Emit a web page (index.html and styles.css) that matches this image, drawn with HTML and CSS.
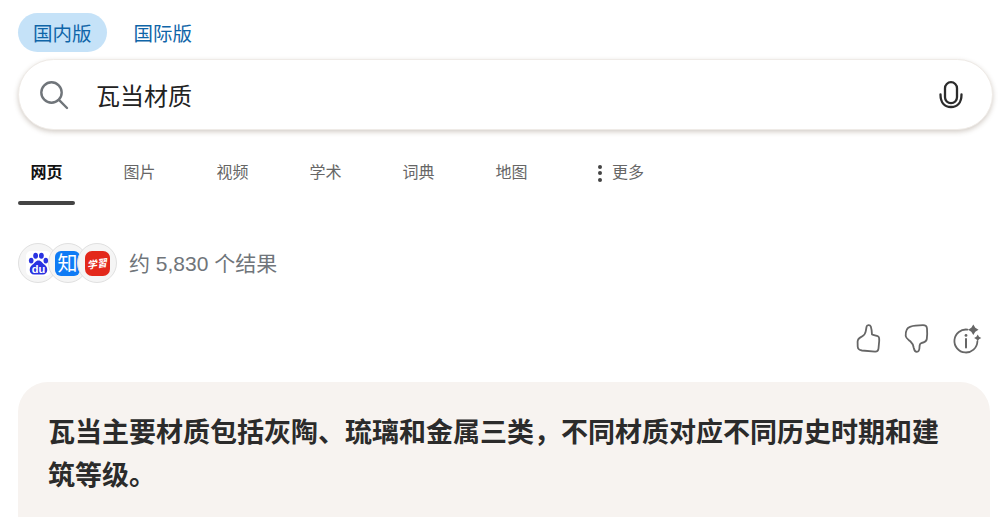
FILE: index.html
```html
<!DOCTYPE html>
<html lang="zh-CN">
<head>
    <meta charset="UTF-8">
    <title>瓦当材质</title>
    <link rel="stylesheet" href="styles.css">
</head>
<body>
    <div class="region-tabs">
        <a class="region active">国内版</a>
        <a class="region">国际版</a>
    </div>

    <div class="search-box">
        <svg class="search-icon" width="30" height="30" viewBox="0 0 30 30" fill="none" stroke="#70757a" stroke-width="2.4" stroke-linecap="round">
            <circle cx="12.5" cy="12.5" r="10.2"/>
            <path d="M20.2 20.2 L28 28"/>
        </svg>
        <span class="query">瓦当材质</span>
        <svg class="mic-icon" width="24" height="28" viewBox="0 0 24 28" fill="none" stroke="#2b2b2b" stroke-width="2.3" stroke-linecap="round">
            <rect x="6" y="1.2" width="12" height="21" rx="6"/>
            <path d="M1.5 13.5 C1.5 22 6 26 12 26 C18 26 22.5 22 22.5 13.5"/>
        </svg>
    </div>

    <nav class="nav">
        <a class="nav-item current">网页</a>
        <a class="nav-item">图片</a>
        <a class="nav-item">视频</a>
        <a class="nav-item">学术</a>
        <a class="nav-item">词典</a>
        <a class="nav-item">地图</a>
        <a class="nav-item more">
            <span class="dots"><i></i><i></i><i></i></span>更多
        </a>
    </nav>

    <div class="sources">
        <div class="logos">
            <span class="logo">
                <svg width="25" height="25" viewBox="0 0 25 25">
                    <rect width="25" height="25" rx="5" fill="#fff"/>
                    <g fill="#2932e1">
                        <ellipse cx="5.2" cy="9.6" rx="2.3" ry="2.9"/>
                        <ellipse cx="9.6" cy="4.8" rx="2.4" ry="3"/>
                        <ellipse cx="15.4" cy="4.8" rx="2.4" ry="3"/>
                        <ellipse cx="19.8" cy="9.6" rx="2.3" ry="2.9"/>
                        <path d="M12.5 9.5 C15.5 9.5 16 12 19 14 C22.5 16.5 22 23.5 17 23.5 L8 23.5 C3 23.5 2.5 16.5 6 14 C9 12 9.5 9.5 12.5 9.5 Z"/>
                    </g>
                    <text x="12.5" y="22" class="du">du</text>
                </svg>
            </span>
            <span class="logo">
                <svg width="25" height="25" viewBox="0 0 25 25">
                    <rect width="25" height="25" rx="6" fill="#0f7bf5"/>
                    <text x="12.5" y="20" class="zhi">知</text>
                </svg>
            </span>
            <span class="logo">
                <svg width="25" height="25" viewBox="0 0 25 25">
                    <rect width="25" height="25" rx="7" fill="#e3281b"/>
                    <text x="0" y="0" class="xue" transform="translate(12.5 16.5) rotate(-8) skewX(-14)">学習</text>
                </svg>
            </span>
        </div>
        <span class="count">约 5,830 个结果</span>
    </div>

    <div class="feedback">
        <svg width="28" height="32" viewBox="0 0 28 32" fill="none" stroke="#666" stroke-width="1.8" stroke-linejoin="round">
            <path d="M2.6 18.7 C2.6 15.5 5 14.5 7 13.5 C9.5 12 10.5 10.5 10.8 8 L11.5 4 C11.8 1.8 15 1.6 15.8 3.5 C16.5 5.5 16.8 8 17 11.5 C19 12.3 21.5 12.5 23 13.3 C24.5 14 24.3 16 24.2 18 L23.5 25.5 C23.3 27.8 22 28.7 20 28.6 L7 27.5 C4.5 27.2 2.8 26 2.7 23.5 Z"/>
        </svg>
        <svg width="28" height="32" viewBox="0 0 28 32" fill="none" stroke="#666" stroke-width="1.8" stroke-linejoin="round">
            <path d="M2.7 13 C2.5 9.5 3.5 5 7 3.8 C10 2.8 16 2.2 20 2.2 C22.5 2.2 23.8 3 24 5.5 C24.3 9 24.3 13 23.8 16 C23.4 18.5 21 19.5 18.5 20 C16.5 20.5 16.5 22 16.5 24 C16.5 27 15.5 28.8 13.8 28.8 C12 28.8 11.2 27 10.8 25 C10.3 22 9.8 20.5 7.5 18.5 C5 16.5 3 15.5 2.7 13 Z"/>
        </svg>
        <svg width="32" height="32" viewBox="0 0 32 32" fill="none" stroke="#666" stroke-width="1.8" stroke-linecap="round">
            <path d="M16.5 6.6 A11.5 11.5 0 1 0 26.4 18.5"/>
            <circle cx="15" cy="12.4" r="1.4" fill="#666" stroke="none"/>
            <path d="M15 16 V24.5" stroke-width="2"/>
            <path d="M22.3 1.5 L24.3 4.7 L27.5 6.7 L24.3 8.7 L22.3 11.9 L20.3 8.7 L17.1 6.7 L20.3 4.7 Z" fill="#666" stroke="none"/>
            <path d="M26.7 11.4 L28 13.7 L30.3 15 L28 16.3 L26.7 18.6 L25.4 16.3 L23.1 15 L25.4 13.7 Z" fill="#666" stroke="none"/>
        </svg>
    </div>

    <div class="answer">
        <p>瓦当主要材质包括灰陶、琉璃和金属三类，不同材质对应不同历史时期和建筑等级。</p>
    </div>
</body>
</html>
```

FILE: styles.css
```css
html, body {
    height: 517px;
    overflow: hidden;
}

body {
    margin: 0;
    padding: 13px 15px 0 18px;
    box-sizing: border-box;
    background: #fff;
    font-family: "Liberation Sans", "Noto Sans CJK SC", sans-serif;
    color: #222;
}

/* region switch */
.region-tabs {
    display: flex;
    gap: 12px;
    height: 39px;
}

.region {
    display: flex;
    align-items: center;
    padding: 0 15px;
    border-radius: 20px;
    font-size: 19.5px;
    color: #0f65a8;
}

.region.active {
    background: #c5e2f8;
}

/* search box */
.search-box {
    display: flex;
    align-items: center;
    height: 71px;
    margin-top: 7px;
    padding: 0 29.5px 0 20px;
    box-sizing: border-box;
    border-radius: 36px;
    background: #fff;
    border: 1px solid #efebe7;
    box-shadow: 0 2px 5px rgba(110, 90, 70, 0.3);
}

.search-icon {
    flex: none;
}

.query {
    flex: 1;
    margin-left: 27px;
    font-size: 24px;
    color: #222;
}

.mic-icon {
    flex: none;
}

/* tabs */
.nav {
    display: flex;
    height: 75px;
}

.nav-item {
    width: 93px;
    padding-top: 33px;
    box-sizing: border-box;
    padding-left: 12.5px;
    font-size: 16px;
    line-height: 20px;
    color: #666;
}

.nav-item.current {
    position: relative;
    color: #111;
    font-weight: bold;
}

.nav-item.current::after {
    content: "";
    position: absolute;
    left: 0;
    top: 71px;
    width: 57px;
    height: 4px;
    border-radius: 2px;
    background: #444;
}

.nav-item.more {
    display: flex;
    width: auto;
    padding-left: 22px;
}

.dots {
    display: flex;
    flex-direction: column;
    justify-content: center;
    gap: 2.5px;
    height: 20px;
    margin-right: 10px;
}

.dots i {
    width: 4px;
    height: 4px;
    border-radius: 50%;
    background: #444;
}

/* sources row */
.sources {
    display: flex;
    align-items: center;
    margin-top: 38px;
    height: 40px;
}

.logos {
    display: flex;
}

.logo {
    display: flex;
    align-items: center;
    justify-content: center;
    flex: none;
    width: 38px;
    height: 38px;
    margin-right: -10.5px;
    border: 1px solid #e0e0e0;
    border-radius: 50%;
    background: #f5f5f5;
}

.logo:last-child {
    margin-right: 0;
}

.du {
    font-family: "Liberation Sans", sans-serif;
    font-size: 11px;
    font-weight: bold;
    fill: #fff;
    text-anchor: middle;
}

.zhi {
    font-size: 20px;
    fill: #fff;
    text-anchor: middle;
}

.xue {
    font-family: "Noto Sans CJK JP", sans-serif;
    font-size: 10px;
    font-weight: bold;
    fill: #fff;
    text-anchor: middle;
}

.count {
    margin-left: 12px;
    margin-top: 2px;
    font-size: 21px;
    line-height: 38px;
    color: #70757a;
}

/* feedback */
.feedback {
    display: flex;
    justify-content: flex-end;
    gap: 20px;
    margin-top: 40px;
    padding-right: 10px;
    height: 32px;
}

/* answer card, cut off by the window */
.answer {
    margin-top: 27px;
    width: 972px;
    height: 135px;
    padding: 30px 31px 0 30px;
    box-sizing: border-box;
    border-radius: 30px 30px 0 0;
    background: #f7f3f0;
}

.answer p {
    margin: 0;
    font-size: 27px;
    line-height: 43px;
    font-weight: bold;
    color: #2b2b2b;
}
```
